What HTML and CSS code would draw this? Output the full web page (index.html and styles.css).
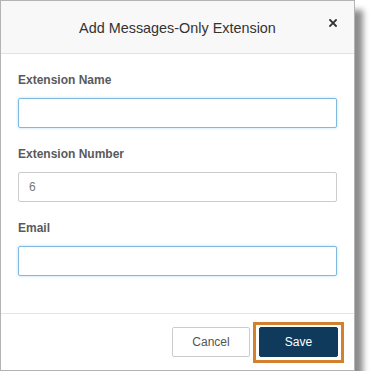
FILE: index.html
```html
<!DOCTYPE html>
<html lang="en">
<head>
<meta charset="utf-8">
<title>Add Messages-Only Extension</title>
<link rel="stylesheet" href="styles.css">
</head>
<body>
<div class="dialog">
  <div class="header">
    <span class="spacer"></span>
    <h1 class="title">Add Messages-Only Extension</h1>
    <button class="close" aria-label="Close">
      <svg width="8" height="8" viewBox="0 0 8 8"><path d="M1 1L7 7M7 1L1 7" stroke="#333" stroke-width="1.8" stroke-linecap="square"/></svg>
    </button>
  </div>
  <div class="body">
    <div class="group">
      <label class="label">Extension Name</label>
      <input class="input focus" type="text">
    </div>
    <div class="group">
      <label class="label">Extension Number</label>
      <input class="input" type="text" value="6">
    </div>
    <div class="group">
      <label class="label">Email</label>
      <input class="input focus" type="text">
    </div>
  </div>
  <div class="footer">
    <button class="btn cancel">Cancel</button>
    <button class="btn save">Save</button>
  </div>
</div>
</body>
</html>
```

FILE: styles.css
```css
html, body {
  margin: 0;
  padding: 0;
  background: #fff;
}
body {
  font-family: "Liberation Sans", Arial, sans-serif;
}
.dialog {
  width: 353px;
  height: 369px;
  border: 1px solid #b4b4b4;
  background: #fff;
  box-shadow: 8px 10px 6px rgba(0, 0, 0, 0.45);
  display: flex;
  flex-direction: column;
}
.header {
  height: 52px;
  background: #f8f8f8;
  border-bottom: 1px solid #e2e2e2;
  display: grid;
  grid-template-columns: 1fr auto 1fr;
  align-items: center;
  padding: 0 17px;
}
.title {
  margin: 0;
  font-size: 14.4px;
  font-weight: normal;
  color: #333;
  line-height: 16px;
  padding-top: 1px;
}
.close {
  justify-self: end;
  align-self: start;
  margin-top: 18px;
  padding: 0;
  border: 0;
  background: transparent;
  width: 8px;
  height: 8px;
  display: flex;
}
.body {
  flex: 1;
  padding: 18px 17px 0;
  display: flex;
  flex-direction: column;
  gap: 18px;
}
.group {
  display: flex;
  flex-direction: column;
}
.label {
  font-size: 12px;
  line-height: 16px;
  font-weight: bold;
  color: #5a5a5a;
  margin-bottom: 10px;
}
.input {
  box-sizing: border-box;
  height: 30px;
  width: 100%;
  border: 1px solid #ccc;
  border-radius: 2px;
  padding: 0 10px;
  font-family: "Liberation Sans", Arial, sans-serif;
  font-size: 12px;
  color: #777;
  background: #fff;
  outline: none;
}
.input.focus {
  border-color: #80b9df;
  box-shadow: 0 0 3px rgba(102, 175, 233, 0.45);
}
.footer {
  border-top: 1px solid #e5e5e5;
  height: 56px;
  display: flex;
  justify-content: flex-end;
  align-items: center;
  gap: 9px;
  padding: 0 16px;
}
.btn {
  box-sizing: border-box;
  height: 30px;
  font-family: "Liberation Sans", Arial, sans-serif;
  font-size: 12px;
  border-radius: 2px;
  padding: 0;
}
.cancel {
  width: 78px;
  background: #fff;
  border: 1px solid #ccc;
  color: #555;
}
.save {
  position: relative;
  width: 79px;
  background: #0f3a5b;
  border: 1px solid #0f3a5b;
  color: #fff;
}
.save::after {
  content: "";
  position: absolute;
  top: -6px;
  bottom: -7px;
  left: -7px;
  right: -7px;
  border: 3px solid #d4812f;
}
```
